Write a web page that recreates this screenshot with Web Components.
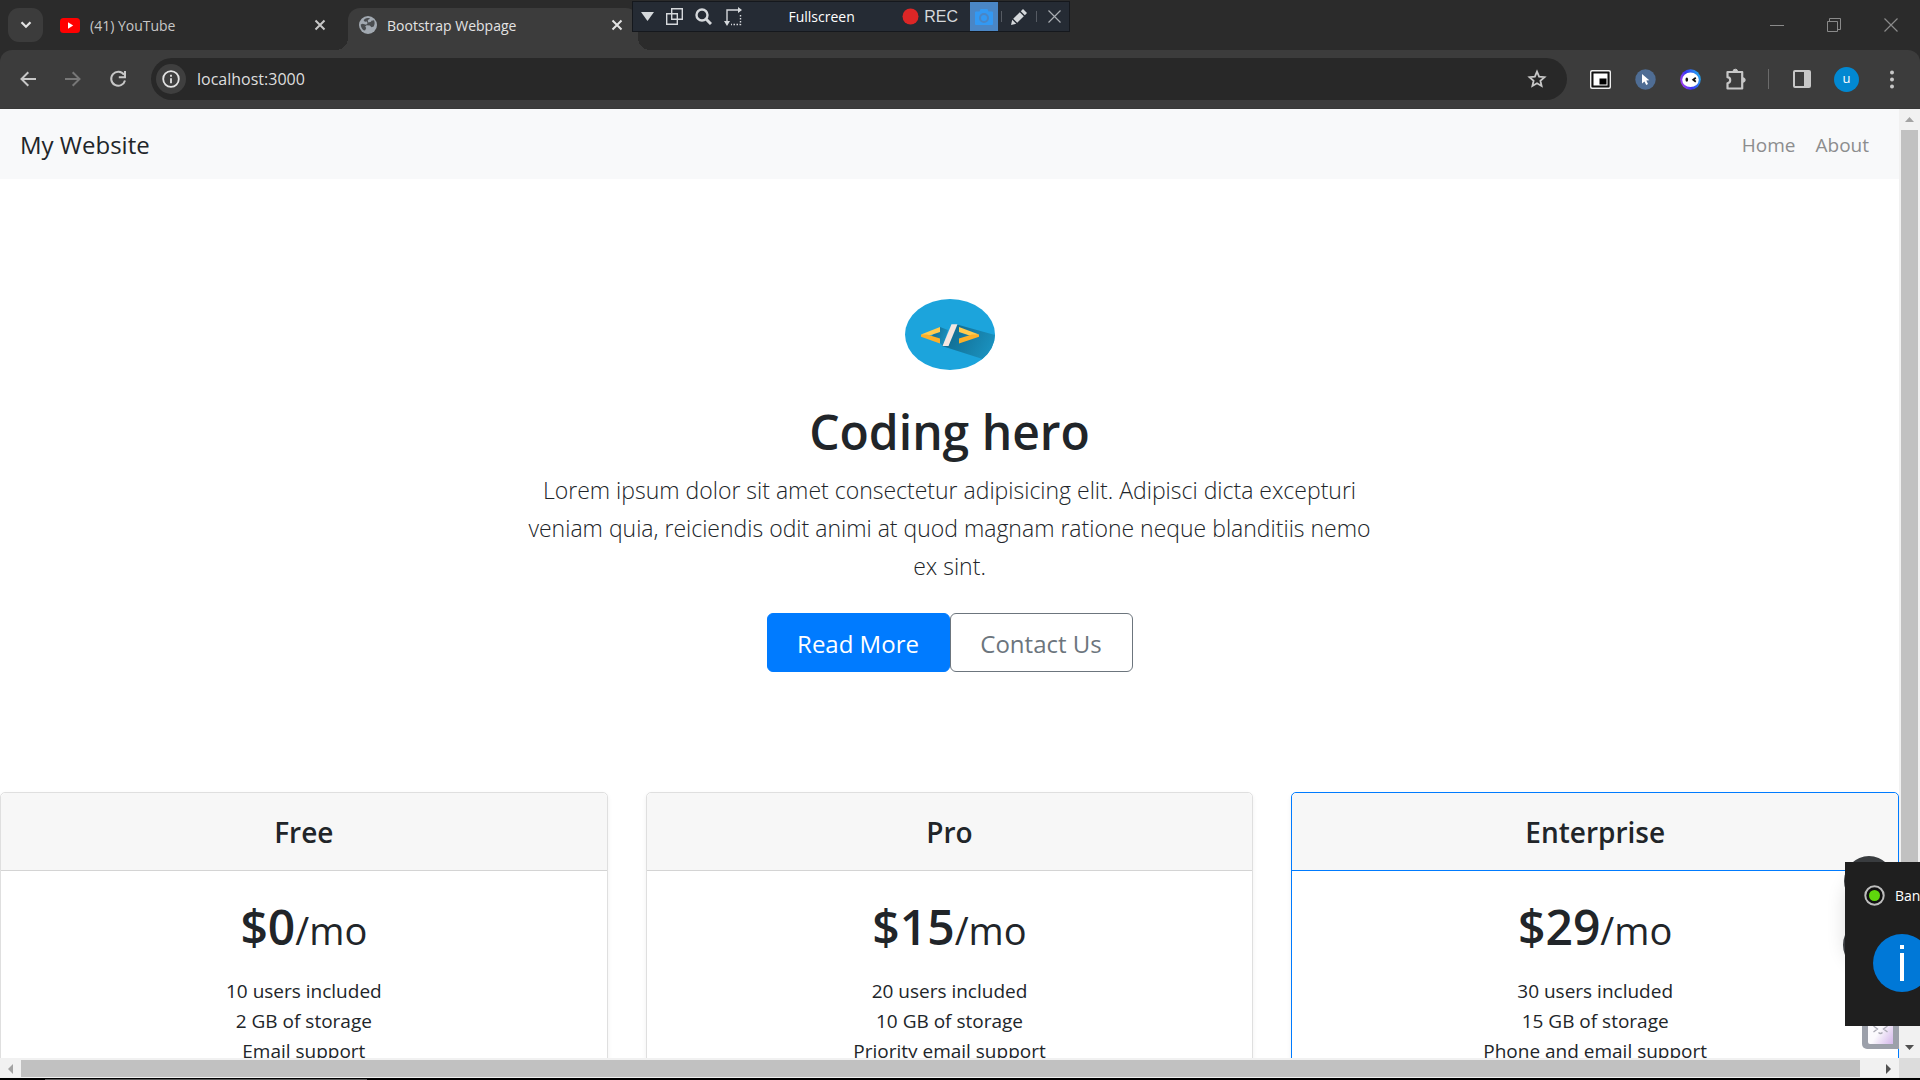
<!DOCTYPE html>
<html lang="en">
<head>
<meta charset="utf-8">
<title>Bootstrap Webpage</title>
<style>
  html, body { margin: 0; height: 100%; overflow: hidden; background: #000; }
  body { font-family: "Segoe UI", "Open Sans", "Noto Sans", sans-serif; color: #212529; }
</style>
</head>
<body>
<desktop-screen>
  <tab-strip slot="tabs"></tab-strip>
  <nav-toolbar slot="toolbar"></nav-toolbar>
  <page-viewport slot="page">
    <site-navbar></site-navbar>
    <site-hero>
      <span slot="title">Coding hero</span>
      <span slot="lead">Lorem ipsum dolor sit amet consectetur adipisicing elit. Adipisci dicta excepturi veniam quia, reiciendis odit animi at quod magnam ratione neque blanditiis nemo ex sint.</span>
    </site-hero>
    <price-deck>
      <price-card price="$0"><span slot="name">Free</span><span slot="item">10 users included</span><span slot="item">2 GB of storage</span><span slot="item">Email support</span></price-card>
      <price-card price="$15"><span slot="name">Pro</span><span slot="item">20 users included</span><span slot="item">10 GB of storage</span><span slot="item">Priority email support</span></price-card>
      <price-card price="$29" primary><span slot="name">Enterprise</span><span slot="item">30 users included</span><span slot="item">15 GB of storage</span><span slot="item">Phone and email support</span></price-card>
    </price-deck>
  </page-viewport>
  <recorder-bar slot="float"></recorder-bar>
  <floating-helper slot="float"></floating-helper>
  <toast-note slot="float"></toast-note>
</desktop-screen>

<script>
const RESET = `
  *, *::before, *::after { box-sizing: border-box; }
  :host { box-sizing: border-box; }
  button { font: inherit; color: inherit; background: none; border: 0; padding: 0; margin: 0; display: flex; align-items: center; justify-content: center; }
  svg { display: block; flex: none; }
`;
function define(name, css, html) {
  customElements.define(name, class extends HTMLElement {
    constructor() {
      super();
      const markup = typeof html === 'function' ? html(this) : html;
      this.attachShadow({ mode: 'open' }).innerHTML = `<style>${RESET}${css}</style>${markup}`;
    }
  });
}

define('desktop-screen', `
  :host { display: grid; grid-template-rows: 50px 59px minmax(0, 1fr) 2px; height: 100vh; position: relative; overflow: hidden; background: #2b2b2b; }
  .task { background: #000; padding: 1px 0 0 45px; }
  .task i { display: block; width: 322px; height: 1px; background: #5a5a5a; }
`, `<slot name="tabs"></slot><slot name="toolbar"></slot><slot name="page"></slot><div class="task"><i></i></div><slot name="float"></slot>`);

const CROSS = `<svg width="12" height="12" viewBox="0 0 12 12" fill="none" stroke="currentColor" stroke-width="2"><path d="M1.5 1.5l9 9M10.5 1.5l-9 9"/></svg>`;

define('browser-tab', `
  :host { display: flex; align-items: center; height: 42px; width: 290px; padding: 0 14px 8px 11px; gap: 10px; color: #c7c7c7; font-size: 14px; line-height: 20px; }
  :host([active]) { background: #3c3c3c; border-radius: 12px 12px 0 0; color: #e3e3e3; position: relative; }
  :host([active])::before, :host([active])::after { content: ""; position: absolute; bottom: 0; width: 12px; height: 12px; }
  :host([active])::before { right: 100%; background: radial-gradient(circle at 0 0, transparent 12px, #3c3c3c 12px); }
  :host([active])::after { left: 100%; background: radial-gradient(circle at 100% 0, transparent 12px, #3c3c3c 12px); }
  .title { flex: 1; white-space: nowrap; overflow: hidden; padding-top: 1px; }
  button { width: 14px; height: 20px; }
`, `<slot name="icon"></slot><span class="title"><slot></slot></span><button aria-label="Close tab">${CROSS}</button>`);

define('tab-strip', `
  :host { display: flex; align-items: flex-start; background: #2b2b2b; padding: 8px 1px 0 8px; color: #e3e3e3; }
  .search { width: 35px; height: 34px; border-radius: 11px; background: #3c3c3c; margin-right: 6px; }
  browser-tab:first-of-type { width: 292px; margin-right: 7px; }
  .win { margin-left: auto; display: flex; color: #8a8a8a; }
  .win button { width: 57px; height: 34px; }
`, `
  <button class="search" aria-label="Search tabs"><svg width="12" height="8" viewBox="0 0 12 8" fill="none" stroke="currentColor" stroke-width="2.2"><path d="M1.5 1.2L6 5.8l4.500-4.600"/></svg></button>
  <browser-tab><svg slot="icon" width="20" height="15" viewBox="0 0 20 15"><rect width="20" height="15" rx="3.500" fill="#f00"/><path d="M8 4.300l5.200 3.200L8 10.700z" fill="#fff"/></svg>(41) YouTube</browser-tab>
  <browser-tab active><svg slot="icon" width="18" height="18" viewBox="0 0 18 18"><circle cx="9" cy="9" r="9" fill="#a2a9b1"/><path d="M10.500 2.200C7 1.500 5.600 2.900 4.600 4.300l1.300 1.500 2-.2.700 1.700-1.500 1.400-3.500-.9-1.900.6c0 2.600 1.500 4.800 3.300 6l1.200-.2 1-2.200-1-1.500 1.400-1.300 3.200.3 1.700 1.700 2.200-.8c1.200-2.200 1.200-4.500.3-6.200l-2.300.6-1.700-1-.2-1.300z" fill="#4a4d50"/><path d="M9.500 3.500l1.800-.8 1.500 1-.8 2-2.600.9-.7-1.800z" fill="#a2a9b1"/></svg>Bootstrap Webpage</browser-tab>
  <div class="win">
    <button aria-label="Minimize"><svg width="14" height="14" viewBox="0 0 14 14" stroke="currentColor" fill="none"><path d="M0 7.500h14"/></svg></button>
    <button aria-label="Restore"><svg width="14" height="14" viewBox="0 0 14 14" stroke="currentColor" fill="none"><path d="M.5 3.500h10v10H.5zM2.500 3V.5h11v11H11"/></svg></button>
    <button aria-label="Close"><svg width="14" height="14" viewBox="0 0 14 14" stroke="currentColor" fill="none" stroke-width="1.200"><path d="M.5.5l13 13M13.500.5l-13 13"/></svg></button>
  </div>`);

define('nav-toolbar', `
  :host { display: flex; align-items: center; background: #3c3c3c; padding: 0 6px 0 5px; border-radius: 12px 12px 0 0; border-bottom: 1px solid #383838; color: #c7c7c7; }
  .nav button { width: 45px; height: 34px; }
  .nav, .ext { display: flex; align-items: center; }
  .box { flex: 1; height: 42px; margin: 0 11px; border-radius: 21px; background: #282828; display: flex; align-items: center; padding: 0 20px 0 5px; }
  .info { width: 30px; height: 30px; border-radius: 50%; background: #3f3f3f; color: #e3e3e3; }
  input { flex: 1; min-width: 0; font: inherit; font-size: 16px; line-height: 24px; color: #dedede; background: none; border: 0; outline: 0; padding: 0; margin-left: 11px; }
  .ext button { width: 45px; height: 34px; }
  .bar { width: 21px; display: flex; justify-content: center; }
  .bar i { width: 1px; height: 20px; background: #6b6b6b; }
  .av { width: 25px; height: 25px; border-radius: 50%; background: #0288d1; color: #fff; font-size: 13px; line-height: 23px; text-align: center; }
`, `
  <div class="nav">
    <button aria-label="Back"><svg width="16" height="16" viewBox="0 0 16 16" fill="none" stroke="currentColor" stroke-width="2"><path d="M16 8H1.600M8.300 1.200L1.500 8l6.800 6.800"/></svg></button>
    <button aria-label="Forward" style="color:#777"><svg width="16" height="16" viewBox="0 0 16 16" fill="none" stroke="currentColor" stroke-width="2"><path d="M0 8h14.400M7.700 1.200L14.500 8l-6.800 6.800"/></svg></button>
    <button aria-label="Reload"><svg width="18" height="18" viewBox="0 0 18 18" fill="none" stroke="currentColor" stroke-width="2"><path d="M15 4.800A7 7 0 1 0 16 10.500M16 1v6.200H9.800"/></svg></button>
  </div>
  <div class="box">
    <button class="info" aria-label="Site information"><svg width="18" height="18" viewBox="0 0 18 18" fill="none" stroke="currentColor" stroke-width="1.800"><circle cx="9" cy="9" r="7.800"/><path d="M9 8.200v5M9 4.800v2"/></svg></button>
    <input type="text" value="localhost:3000" aria-label="Address">
    <button aria-label="Bookmark"><svg width="20" height="20" viewBox="0 0 20 20" fill="none" stroke="currentColor" stroke-width="1.800"><path d="M10 2.600l2.100 5 5.400.5-4.100 3.600 1.200 5.300L10 14.200 5.400 17l1.200-5.300L2.500 8.100l5.400-.5z"/></svg></button>
  </div>
  <div class="ext">
    <button aria-label="Picture in picture"><svg width="21" height="19" viewBox="0 0 21 19"><rect width="21" height="19" rx="2" fill="#eee"/><rect x="1.400" y="1.400" width="18.200" height="16.200" rx="1" fill="#111"/><rect x="3.500" y="3.500" width="14" height="12" fill="#fff"/><rect x="9.500" y="8.500" width="7" height="6" fill="#000"/></svg></button>
    <button aria-label="Cursor extension"><svg width="21" height="21" viewBox="0 0 21 21"><circle cx="10.500" cy="10.500" r="10.200" fill="#4f6d94"/><path d="M7 5l7.300 6.300-3 .3 1.700 3.500-1.800.9-1.700-3.600L7 14.500z" fill="#fff"/></svg></button>
    <button aria-label="Assistant extension"><svg width="21" height="21" viewBox="0 0 21 21"><defs><linearGradient id="g" x1="0" y1=".8" x2="1" y2=".4"><stop offset="0" stop-color="#b63df0"/><stop offset=".45" stop-color="#3a35f5"/><stop offset="1" stop-color="#22a7f0"/></linearGradient></defs><circle cx="10.500" cy="10.500" r="10.300" fill="url(#g)"/><ellipse cx="10.500" cy="10.800" rx="8.300" ry="7.200" fill="#fff"/><ellipse cx="6.800" cy="10.700" rx="1.300" ry="2.100" fill="#111"/><path d="M15.800 8.800l-2.600 2 2.600 2" stroke="#111" stroke-width="1.800" fill="none"/></svg></button>
    <button aria-label="Extensions"><svg width="22" height="22" viewBox="0 0 22 22" fill="none" stroke="currentColor" stroke-width="2.200" stroke-linejoin="round"><path d="M2.500 4h14.700v16.500H2.500v-5.300c3.600-.8 3.600-5.400 0-6z"/><path d="M8 3.500a2.300 2.300 0 0 1 4.600 0zM18 9.800a2.200 2.200 0 0 1 0 4.400z" fill="currentColor" stroke-width="1"/></svg></button>
    <span class="bar"><i></i></span>
    <button aria-label="Side panel"><svg width="18" height="18" viewBox="0 0 18 18"><rect x="1" y="1" width="16" height="16" rx="1" fill="none" stroke="currentColor" stroke-width="2"/><path d="M11 1h6v16h-6z" fill="currentColor"/></svg></button>
    <button aria-label="Profile"><span class="av">u</span></button>
    <button aria-label="Menu"><svg width="4" height="19" viewBox="0 0 4 19" fill="currentColor"><circle cx="2" cy="2.500" r="2"/><circle cx="2" cy="9.500" r="2"/><circle cx="2" cy="16.500" r="2"/></svg></button>
  </div>`);

define('page-viewport', `
  :host { display: grid; grid-template: minmax(0, 1fr) 20px / minmax(0, 1fr) 21px; background: #fff; min-height: 0; }
  .view { overflow: hidden; background: #fff; }
  .v, .h { background: #f1f1f1; display: flex; }
  .v { flex-direction: column; padding: 0 2px; }
  .h { padding: 2px 0 1px; }
  .v button { width: 17px; height: 21px; color: #505050; }
  .h button { width: 21px; height: 17px; color: #505050; }
  .v i { height: 780px; background: #c1c1c1; margin-bottom: auto; }
  .h i { flex: 1; background: #c1c1c1; margin-right: 18px; }
  .off { color: #a3a3a3 !important; }
  .corner { background: #dcdcdc; }
`, `
  <div class="view"><slot></slot></div>
  <div class="v"><button class="off" aria-label="Scroll up"><svg width="9" height="5"><path d="M0 5L4.500 0 9 5z" fill="currentColor"/></svg></button><i></i><button aria-label="Scroll down"><svg width="9" height="5"><path d="M0 0l4.500 5L9 0z" fill="currentColor"/></svg></button></div>
  <div class="h"><button class="off" aria-label="Scroll left"><svg width="5" height="10"><path d="M5 0L0 5l5 5z" fill="currentColor"/></svg></button><i></i><button aria-label="Scroll right"><svg width="5" height="10"><path d="M0 0l5 5-5 5z" fill="currentColor"/></svg></button></div>
  <div class="corner"></div>`);

define('site-navbar', `
  :host { display: block; }
  nav { display: flex; align-items: center; justify-content: space-between; height: 70px; background: #f8f9fa; padding: 2px 30px 0 20px; }
  a { text-decoration: none; color: #212529; }
  .brand { font-size: 24px; line-height: 38px; }
  .links { display: flex; gap: 20px; }
  .links a { color: #8c8d8e; font-size: 19px; line-height: 30px; }
`, `<nav><a class="brand" href="#">My Website</a><div class="links"><a href="#home">Home</a><a href="#about">About</a></div></nav>`);

define('site-hero', `
  :host { display: flex; flex-direction: column; align-items: center; text-align: center; padding: 120px 0; }
  h1 { font-size: 48px; font-weight: 600; line-height: 60px; margin: 32px 0 9px; }
  p { width: 860px; max-width: 100%; margin: 0 0 28px; font-size: 23px; font-weight: 300; line-height: 38px; }
  .actions { display: flex; }
  .actions button { width: 183px; height: 59px; border-radius: 6px; border: 1px solid #6c757d; color: #6c757d; font-size: 24px; line-height: 38px; padding-top: 2px; }
  .actions .primary { background: #007bff; border-color: #007bff; color: #fff; }
`, `
  <svg width="90" height="71" viewBox="0 0 90 71" role="img" aria-label="Code">
    <defs><clipPath id="c"><ellipse cx="45" cy="35.500" rx="45" ry="35.500"/></clipPath><linearGradient id="s" x1="0" y1="0" x2="1" y2=".4"><stop offset="0" stop-color="#0f6488"/><stop offset="1" stop-color="#1a90bd"/></linearGradient></defs>
    <ellipse cx="45" cy="35.500" rx="45" ry="35.500" fill="#1ca4dc"/>
    <g clip-path="url(#c)" fill="url(#s)"><path d="M35 28l8 3-5 16-3-3-10-5z"/><path d="M52 25.500L90 36v28L37 47z"/></g>
    <path d="M35 28v5l-12 4-7-1.500z" fill="#ffcb4f"/><path d="M16 35.500v2.200L35 44.500v-5L22 35.500z" fill="#fbb02a"/>
    <path d="M54 28v5l12 4 8-1.500z" fill="#ffcb4f"/><path d="M74 35.500v2.200L54 44.500v-5l13-4z" fill="#fbb02a"/>
    <path d="M46.500 25.200h6L43.500 47h-6z" fill="#f5e6e0"/>
  </svg>
  <h1><slot name="title"></slot></h1>
  <p><slot name="lead"></slot></p>
  <div class="actions"><button class="primary">Read More</button><button>Contact Us</button></div>`);

define('price-deck', `
  :host { display: grid; grid-template-columns: repeat(3, minmax(0, 1fr)); gap: 38px; }
`, `<slot></slot>`);

define('price-card', `
  :host { display: block; border: 1px solid #dfdfdf; border-radius: 5px; text-align: center; box-shadow: 0 2px 5px rgba(0,0,0,.06); }
  header { background: #f7f7f7; border-bottom: 1px solid #d4d4d4; border-radius: 5px 5px 0 0; padding: 21px 25px 19px; }
  h4 { margin: 0; font-size: 28px; font-weight: 600; line-height: 37px; }
  :host([primary]), :host([primary]) header { border-color: #007bff; }
  .body { padding: 26px 25px 25px; }
  .price { margin: 0 0 16px; font-size: 48px; font-weight: 600; line-height: 60px; }
  .price small { font-size: 38px; font-weight: 400; }
  .list { font-size: 19px; line-height: 30px; }
  ::slotted([slot=item]) { display: block; }
`, el => `
  <header><h4><slot name="name"></slot></h4></header>
  <div class="body"><div class="price">${el.getAttribute('price')}<small>/mo</small></div><div class="list"><slot name="item"></slot></div></div>`);

define('recorder-bar', `
  :host { position: absolute; left: 632px; top: 1px; width: 438px; height: 31px; background: #252b34; border: 1px solid #15181d; display: flex; align-items: center; color: #d5d8db; font-size: 14px; line-height: 20px; padding-left: 8px; }
  .b1 { width: 13px; margin-right: 12px; }
  .b2 { width: 17px; margin-right: 12px; }
  .b3 { width: 18px; margin-right: 10px; }
  .mode { flex: 1; text-align: center; color: #fff; padding-right: 11px; }
  .rec { gap: 5px; margin-right: 12px; font: 16px/20px "Liberation Sans", Arial, sans-serif; }
  .cam { width: 28px; height: 29px; background: #4a86c5; }
  .sep { width: 1px; height: 11px; background: #565b63; }
  .sep.first { margin-left: 3px; }
  .pen { margin: 0 9px; }
  .x { margin: 0 8px 0 11px; }
`, `
  <button class="b1" aria-label="Menu"><svg width="13" height="9"><path d="M0 0h13L6.500 9z" fill="currentColor"/></svg></button>
  <button class="b2" aria-label="Window mode"><svg width="17" height="17" viewBox="0 0 17 17" fill="none" stroke="currentColor" stroke-width="1.400"><path d="M5.700.7h10.600v10.600H5.700zM5 5.700H.7v10.600h10.600V12M5.700 5.700h5.600v5.600"/></svg></button>
  <button class="b2" aria-label="Around mouse"><svg width="17" height="17" viewBox="0 0 17 17" fill="none" stroke="currentColor" stroke-width="2.400"><circle cx="7" cy="7" r="5.500"/><path d="M11 11l5 5" stroke-width="3"/></svg></button>
  <button class="b3" aria-label="Select area"><svg width="18" height="19" viewBox="0 0 18 19" fill="none" stroke="currentColor" stroke-width="1.400"><path d="M3 15V3h11"/><path d="M0 14h6l-3 5zM14 0l4 3-4 3z" fill="currentColor" stroke="none"/><path d="M16.500 8v9.500H7" stroke-dasharray="1.500 1.500"/></svg></button>
  <span class="mode">Fullscreen</span>
  <button class="rec"><svg width="17" height="17"><circle cx="8.500" cy="8.500" r="8" fill="#dc2626"/></svg>REC</button>
  <button class="cam" aria-label="Screenshot"><svg width="18" height="16" viewBox="0 0 18 16" fill="none"><path d="M1 2.500h3.500L5.500 0h7l1 2.500H17a1 1 0 0 1 1 1V15a1 1 0 0 1-1 1H1a1 1 0 0 1-1-1V3.500a1 1 0 0 1 1-1z" fill="#3399f3"/><circle cx="9" cy="9" r="4" stroke="#4a86c5" stroke-width="2"/></svg></button>
  <span class="sep first"></span>
  <button class="pen" aria-label="Draw"><svg width="16" height="16" viewBox="0 0 16 16" fill="currentColor"><path d="M0 16l1.200-5.200 4 4zM2.200 9.800l6.600-6.600 4 4-6.600 6.600zM9.800 2.200L12 0l4 4-2.200 2.200z"/></svg></button>
  <span class="sep"></span>
  <button class="x" aria-label="Close recorder"><svg width="13" height="13" fill="none" stroke="#a9adb2" stroke-width="1.200"><path d="M.5.5l12 12M12.500.5l-12 12"/></svg></button>`);

define('floating-helper', `
  :host { position: absolute; right: 21px; bottom: 31px; width: 56px; height: 193px; display: block; overflow: visible; }
  svg { overflow: visible; }
`, `
  <svg width="56" height="193" viewBox="0 0 56 193">
    <defs><filter id="f" x="-100%" y="-100%" width="300%" height="300%"><feGaussianBlur stdDeviation="10"/></filter><linearGradient id="p" x1="0" y1="0" x2="1" y2="1"><stop offset=".55" stop-color="#fbfafd"/><stop offset="1" stop-color="#d3b6ea"/></linearGradient></defs>
    <rect x="3" y="20" width="50" height="90" rx="25" fill="#000" opacity=".15" filter="url(#f)"/>
    <circle cx="26" cy="25" r="25" fill="#393c3f"/><circle cx="26" cy="89" r="26" fill="#393c3f"/>
    <path d="M19 150h37v43H24a5 5 0 0 1-5-5z" fill="#9ca0aa"/>
    <path d="M25 150h25v38H27a2 2 0 0 1-2-2z" fill="url(#p)"/>
    <path d="M30.500 170l4 3-4 3M44.500 170l-4 3 4 3M35.500 176.500q2 2 4 0" fill="none" stroke="#aaaab4" stroke-width="1.300"/>
  </svg>`);

define('toast-note', `
  :host { position: absolute; right: 0; bottom: 54px; width: 75px; height: 164px; display: block; background: #1f1f1f; color: #fff; overflow: hidden; font-size: 14px; line-height: 20px; }
  .head { display: flex; align-items: center; gap: 10px; margin: 23px 0 28px 19px; white-space: nowrap; }
  .big { margin-left: 28px; }
`, `
  <div class="head"><svg width="21" height="21" viewBox="0 0 21 21"><circle cx="10.500" cy="10.500" r="9.200" fill="#111" stroke="#bdbdbd" stroke-width="2"/><circle cx="10.500" cy="10.500" r="5.500" fill="#5fd60c"/></svg><span>Ban</span></div>
  <svg class="big" width="58" height="58" viewBox="0 0 58 58"><circle cx="29" cy="29" r="29" fill="#0078d7"/><path d="M27 19h4v28h-4zM27 11h4v4h-4z" fill="#fff"/></svg>`);
</script>
</body>
</html>
